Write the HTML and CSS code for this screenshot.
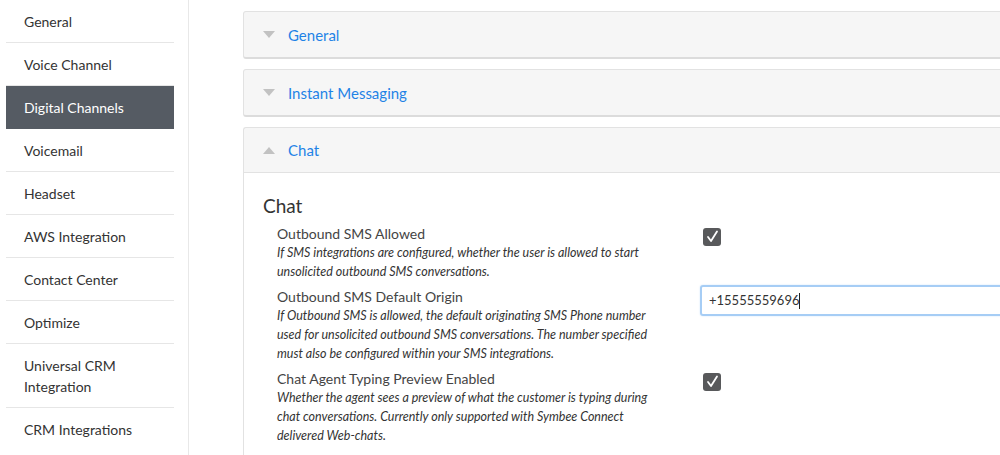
FILE: index.html
```html
<!DOCTYPE html>
<html lang="en">
<head>
  <meta charset="UTF-8">
  <meta name="viewport" content="width=device-width, initial-scale=1.0">
  <title>Settings</title>
  <link rel="stylesheet" href="styles.css">
</head>
<body>
  <div class="page">
    <!-- left menu -->
    <div class="sidebar">
      <ul class="menu">
        <li>General</li>
        <li>Voice Channel</li>
        <li class="active">Digital Channels</li>
        <li>Voicemail</li>
        <li>Headset</li>
        <li>AWS Integration</li>
        <li>Contact Center</li>
        <li>Optimize</li>
        <li>Universal CRM<br>Integration</li>
        <li class="last">CRM Integrations</li>
      </ul>
    </div>

    <div class="main">
      <div class="panel">
        <div class="panel-head"><span class="tri down"></span>General</div>
      </div>
      <div class="panel">
        <div class="panel-head"><span class="tri down"></span>Instant Messaging</div>
      </div>
      <div class="panel open">
        <div class="panel-head"><span class="tri up"></span>Chat</div>
        <div class="panel-body">
          <h2>Chat</h2>
          <div class="fields">
            <div class="field-text">
              <div class="label">Outbound SMS Allowed</div>
              <div class="desc">If SMS integrations are configured, whether the user is allowed to start unsolicited outbound SMS conversations.</div>
            </div>
            <div class="field-value"><span class="check"><svg width="13" height="13" viewBox="0 0 13 13"><path d="M2 7 L5 11 L11 1.5" fill="none" stroke="#fff" stroke-width="1.8" stroke-linecap="round" stroke-linejoin="round"/></svg></span></div>

            <div class="field-text">
              <div class="label">Outbound SMS Default Origin</div>
              <div class="desc">If Outbound SMS is allowed, the default originating SMS Phone number used for unsolicited outbound SMS conversations. The number specified must also be configured within your SMS integrations.</div>
            </div>
            <div class="field-value"><div class="textbox">+15555559696<span class="caret"></span></div></div>

            <div class="field-text">
              <div class="label">Chat Agent Typing Preview Enabled</div>
              <div class="desc">Whether the agent sees a preview of what the customer is typing during chat conversations. Currently only supported with Symbee Connect delivered Web-chats.</div>
            </div>
            <div class="field-value"><span class="check"><svg width="13" height="13" viewBox="0 0 13 13"><path d="M2 7 L5 11 L11 1.5" fill="none" stroke="#fff" stroke-width="1.8" stroke-linecap="round" stroke-linejoin="round"/></svg></span></div>
          </div>
        </div>
      </div>
    </div>
  </div>
</body>
</html>
```

FILE: styles.css
```css
* {
  box-sizing: border-box;
}

body {
  margin: 0;
  font-family: Lato, "Open Sans", sans-serif;
  color: #333;
  background: #fff;
  overflow: hidden;
}

.page {
  display: flex;
  height: 455px;
}

.sidebar {
  width: 189px;
  border-right: 1px solid #e8e8e8;
  padding-left: 6px;
  flex-shrink: 0;
}

.menu {
  list-style: none;
  margin: 0;
  padding: 0;
  width: 168px;
}

.menu li {
  font-size: 14px;
  line-height: 21px;
  padding: 11px 18px 10px;
  border-bottom: 1px solid #e6e6e6;
  color: #333;
}

.menu li.active {
  background: #555b63;
  color: #fff;
  border-bottom-color: #555b63;
}

.menu li.last {
  border-bottom: none;
}

.main {
  flex: 1;
  overflow: hidden;
  padding: 11px 0 0 54px;
}

.panel {
  width: 820px;
  border: 1px solid #e2e2e2;
  border-bottom: 2px solid #dcdcdc;
  border-radius: 3px;
  margin-bottom: 10px;
  background: #f6f6f6;
}

.panel-head {
  height: 45px;
  display: flex;
  align-items: center;
  padding-left: 19px;
  font-size: 15px;
  color: #1f83e6;
}

.tri {
  width: 0;
  height: 0;
  border-left: 6px solid transparent;
  border-right: 6px solid transparent;
  margin-right: 13px;
}

.tri.down {
  border-top: 7px solid #c2c2c2;
}

.tri.up {
  border-bottom: 7px solid #c2c2c2;
}

.panel.open {
  border-bottom: none;
  border-right: none;
}

.panel.open .panel-head {
  border-bottom: 1px solid #e2e2e2;
}

.panel-body {
  background: #fff;
  padding: 21px 0 0 19px;
  height: 300px;
}

h2 {
  font-weight: normal;
  font-size: 19px;
  margin: 0 0 7px;
  color: #333;
}

.fields {
  display: grid;
  grid-template-columns: 390px 1fr;
  column-gap: 33px;
  row-gap: 6px;
  padding-left: 14px;
}

.label {
  font-size: 14px;
  line-height: 19px;
  color: #444;
}

.desc {
  font-size: 12.5px;
  line-height: 19px;
  font-style: italic;
  color: #333;
}

.field-value {
  padding-top: 3px;
}

.check {
  display: inline-flex;
  align-items: center;
  justify-content: center;
  width: 18px;
  height: 18px;
  margin-left: 3px;
  background: #58595b;
  border-radius: 3px;
}

.textbox {
  height: 31px;
  width: 400px;
  margin-top: -5px;
  border: 2px solid #a6cdf5;
  border-radius: 3px;
  box-shadow: 0 0 2px #cfe3fa;
  font-size: 13px;
  padding: 5px 7px;
  line-height: 17px;
  color: #333;
  display: flex;
  align-items: center;
}

.caret {
  display: inline-block;
  width: 1px;
  height: 16px;
  background: #222;
}
```
